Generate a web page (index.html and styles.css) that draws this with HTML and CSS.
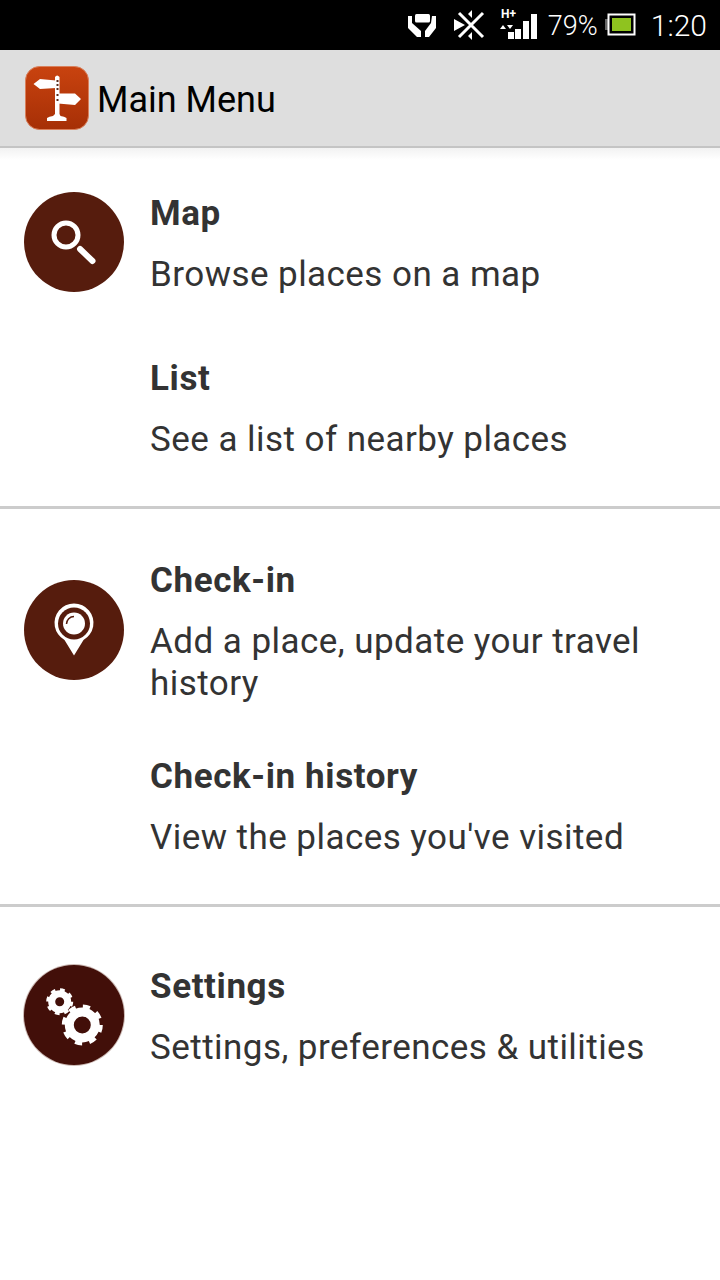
FILE: index.html
```html
<!DOCTYPE html>
<html lang="en">

<head>
    <meta charset="UTF-8">
    <meta name="viewport" content="width=device-width, initial-scale=1.0">
    <title>Main Menu</title>
    <link rel="stylesheet" href="styles.css">
</head>

<body>
    <div class="status-bar">
        <svg class="status-handset" width="30" height="26" viewBox="0 0 30 26">
            <rect x="8" y="2" width="15" height="8.500" rx="1.500" fill="#fff"/>
            <path d="M1 4h4v7l9 8v6h-4l-9-9zM29 4h-4l-1 7-6 8v6h4l7-9z" fill="#fff"/>
        </svg>
        <svg class="status-mute" width="34" height="32" viewBox="0 0 34 32">
            <path d="M6 4l24 24M30 4L6 28" stroke="#fff" stroke-width="3" fill="none"/>
            <path d="M1 10l11 6-11 6zM19 1v8l-4-4zM19 31v-8l-4 4z" fill="#fff"/>
        </svg>
        <svg class="status-signal" width="38" height="34" viewBox="0 -2 38 34">
            <text x="1" y="7.500" class="signal-type">H+</text>
            <path d="M0 19l3-4 3 4zM7 15h6l-3 4z" fill="#fff"/>
            <path d="M8 22h6v7H8zM15 19h6v10h-6zM23 11h6v18h-6zM31 4h6v25h-6z" fill="#fff"/>
        </svg>
        <span class="status-percent">79%</span>
        <svg class="status-battery" width="31" height="24" viewBox="0 0 31 24">
            <path d="M0 6h3v11H0z" fill="#666"/>
            <rect x="3.500" y="1.500" width="26" height="20" fill="none" stroke="#fff" stroke-width="2"/>
            <rect x="7" y="5" width="19" height="13" fill="#8fc31f"/>
        </svg>
        <span class="status-time">1:20</span>
    </div>

    <header class="app-bar">
        <svg class="app-logo" width="64" height="64" viewBox="0 0 64 64">
            <defs>
                <linearGradient id="logoFill" x1="0" y1="0" x2="0" y2="1">
                    <stop offset="0" stop-color="#c9430f"/>
                    <stop offset="1" stop-color="#a62f06"/>
                </linearGradient>
            </defs>
            <rect x="0.500" y="0.500" width="63" height="63" rx="14" fill="url(#logoFill)" stroke="#d9805c"/>
            <path d="M30 11q2-3 4.500 0V48l1 2q4 .5 6 2v3H22v-3q2-1.500 6-2l2-2z" fill="#fff"/>
            <path d="M8.500 18l6.500-5 16 1.500V22l-16 1zM33 27.500h17l6 5.500-6 6-17-1.500z" fill="#fff"/>
            <path d="M31.500 14h2v2h-2zM31.500 18h2v2h-2zM31.500 22h2v2h-2zM31.500 28h2v2h-2zM31.500 33h2v2h-2z" fill="#5b2a1a"/>
        </svg>
        <h1 class="app-title">Main Menu</h1>
    </header>

    <main>
        <section class="menu-group group-browse">
            <div class="menu-row">
                <div class="menu-icon">
                    <svg width="100" height="100" viewBox="0 0 100 100">
                        <circle cx="42" cy="43" r="12" fill="none" stroke="#fff" stroke-width="5"/>
                        <path d="M56 57l12.500 12" stroke="#fff" stroke-width="6" stroke-linecap="round"/>
                    </svg>
                </div>
                <div class="menu-text">
                    <h3>Map</h3>
                    <p>Browse places on a map</p>
                </div>
            </div>
            <div class="menu-row">
                <div></div>
                <div class="menu-text">
                    <h3>List</h3>
                    <p>See a list of nearby places</p>
                </div>
            </div>
        </section>

        <section class="menu-group group-checkin">
            <div class="menu-row">
                <div class="menu-icon">
                    <svg width="100" height="100" viewBox="0 0 100 100">
                        <path d="M50 75.500L40.500 60A19.500 19.500 0 1 1 59.500 60z" fill="#fff"/>
                        <circle cx="50" cy="43.500" r="16" fill="#561c0d"/>
                        <circle cx="50" cy="43.500" r="11" fill="#fff"/>
                        <path d="M42.500 44a7.500 7.500 0 0 1 7.500-7.500" fill="none" stroke="#561c0d" stroke-width="1.500"/>
                    </svg>
                </div>
                <div class="menu-text">
                    <h3>Check-in</h3>
                    <p>Add a place, update your travel history</p>
                </div>
            </div>
            <div class="menu-row">
                <div></div>
                <div class="menu-text">
                    <h3>Check-in history</h3>
                    <p>View the places you've visited</p>
                </div>
            </div>
        </section>

        <section class="menu-group group-settings">
            <div class="menu-row">
                <div class="menu-icon menu-icon-dark">
                    <svg width="100" height="100" viewBox="0 0 100 100">
                        <circle cx="35.700" cy="36.700" r="8" fill="none" stroke="#fff" stroke-width="7"/>
                        <circle cx="35.700" cy="36.700" r="11.500" fill="none" stroke="#fff" stroke-width="4" stroke-dasharray="4.500 4.530"/>
                        <circle cx="58.300" cy="60" r="13" fill="none" stroke="#fff" stroke-width="9"/>
                        <circle cx="58.300" cy="60" r="18" fill="none" stroke="#fff" stroke-width="5" stroke-dasharray="7 7.140"/>
                    </svg>
                </div>
                <div class="menu-text">
                    <h3>Settings</h3>
                    <p>Settings, preferences &amp; utilities</p>
                </div>
            </div>
        </section>
    </main>
</body>

</html>
```

FILE: styles.css
```css
body {
    margin: 0;
    font-family: Roboto, "Liberation Sans", sans-serif;
    background: #fff;
    color: #333;
}
.status-bar {
    height: 50px;
    background: #000;
    color: #fff;
    display: flex;
    align-items: center;
    padding-right: 13px;
}
.status-handset {
    margin-left: auto;
}
.status-mute {
    margin-left: 16px;
}
.status-signal {
    margin-left: 13px;
}
.signal-type {
    font-size: 12px;
    font-weight: 700;
    fill: #fff;
}
.status-percent {
    margin: 2px 0 0 10px;
    font-size: 27px;
    font-weight: 300;
}
.status-battery {
    margin-left: 7px;
}
.status-time {
    margin-left: 15px;
    font-size: 30px;
    font-weight: 300;
}
.app-bar {
    height: 98px;
    box-sizing: border-box;
    background: #dedede;
    border-bottom: 2px solid #c4c4c4;
    display: flex;
    align-items: center;
    padding-left: 25px;
}
.app-title {
    margin: 3px 0 0 8px;
    font-size: 36px;
    font-weight: 400;
    color: #000;
}
.menu-group {
    display: flex;
    flex-direction: column;
    padding-bottom: 45px;
    border-bottom: 3px solid #ccc;
}
.group-browse {
    padding-top: 44px;
    gap: 62px;
    background: linear-gradient(#f2f2f2, #fff 12px);
}
.group-checkin {
    padding-top: 51px;
    gap: 51px;
}
.group-settings {
    padding-top: 58px;
    border-bottom: 0;
}
.menu-row {
    display: grid;
    grid-template-columns: 150px 1fr;
    align-items: center;
    padding-right: 60px;
}
.menu-icon {
    width: 100px;
    height: 100px;
    margin: 0 0 4px 24px;
    border-radius: 50%;
    background: #561c0d;
}
.group-checkin .menu-icon {
    margin-bottom: 6px;
}
.menu-icon-dark {
    background: #420f09;
    box-shadow: 0 0 0 1px #cbb9b4;
}
.menu-icon svg {
    display: block;
}
.menu-text h3 {
    margin: 0 0 19px;
    font-size: 35px;
    line-height: 42px;
    font-weight: 700;
    letter-spacing: 0.6px;
}
.menu-text p {
    margin: 0;
    font-size: 35px;
    line-height: 42px;
    letter-spacing: 0.45px;
}
```
